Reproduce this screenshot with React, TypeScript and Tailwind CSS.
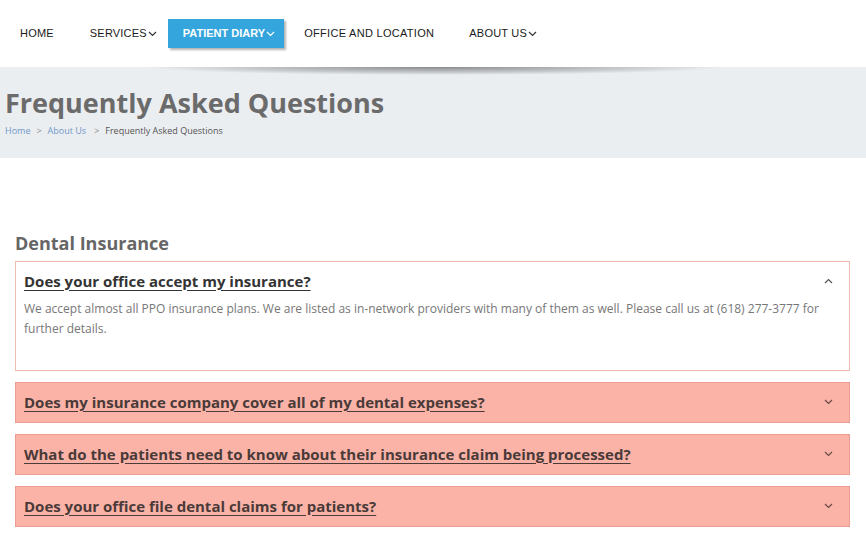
import React from "react";

const Chevron = ({ up = false, className = "" }: { up?: boolean; className?: string }) => (
  <svg width="9" height="6" viewBox="0 0 9 6" className={className}>
    <path
      d={up ? "M1 5 L4.5 1.5 L8 5" : "M1 1 L4.5 4.5 L8 1"}
      fill="none"
      stroke="currentColor"
      strokeWidth="1.2"
    />
  </svg>
);

const closed = [
  "Does my insurance company cover all of my dental expenses?",
  "What do the patients need to know about their insurance claim being processed?",
  "Does your office file dental claims for patients?",
];

export default function App() {
  return (
    <div className="w-[866px] h-[547px] bg-white overflow-hidden" style={{ fontFamily: '"Open Sans", sans-serif' }}>
      {/* Header nav */}
      <div className="h-[67px] flex items-center pl-[20px] text-[11px] tracking-[0.2px] text-[#1a1a1a]" style={{ fontFamily: '"Liberation Sans", Arial, sans-serif' }}>
        <span>HOME</span>
        <span className="ml-[36px] flex items-center gap-[1px]">
          SERVICES
          <Chevron className="text-[#333]" />
        </span>
        <span className="ml-[11px] h-[29px] pl-[15px] pr-[9px] flex items-center gap-[1px] bg-[#35a5dd] text-white font-bold tracking-normal shadow-[2px_2px_2px_rgba(0,0,0,0.3)]">
          PATIENT DIARY
          <Chevron className="text-white" />
        </span>
        <span className="ml-[20px] tracking-[0.3px]">OFFICE AND LOCATION</span>
        <span className="ml-[35px] flex items-center gap-[1px]">
          ABOUT US
          <Chevron className="text-[#333]" />
        </span>
      </div>

      {/* Title band */}
      <div className="relative h-[91px] bg-[#ebeef1] pl-[5px] pt-[19px]">
        <div
          className="absolute left-[90px] top-0 w-[690px] h-[10px]"
          style={{ background: "radial-gradient(ellipse 52% 100% at 50% 0%, rgba(0,0,0,0.42), rgba(0,0,0,0.15) 55%, rgba(0,0,0,0) 80%)" }}
        />
        <h1 className="text-[27px] leading-[34px] font-bold text-[#6b6b6b]">Frequently Asked Questions</h1>
        <div className="mt-[4px] text-[9px] leading-[14px] flex items-center gap-[6px] text-[#555]">
          <span className="text-[#6f98c8]">Home</span>
          <span className="text-[#888]">&gt;</span>
          <span className="text-[#6f98c8]">About Us</span>
          <span className="text-[#888] ml-[2px]">&gt;</span>
          <span>Frequently Asked Questions</span>
        </div>
      </div>

      {/* Content */}
      <div className="pl-[15px] pr-[16px] pt-[73px]">
        <h2 className="text-[18px] leading-[24px] font-bold text-[#666] mb-[6px]">Dental Insurance</h2>

        <div className="border border-[#efbdae] pl-[8px] pr-[16px] pt-[8px] pb-[31px]">
          <div className="flex items-center justify-between">
            <span className="text-[15px] leading-[22px] font-bold text-[#333] underline underline-offset-[3px]">
              Does your office accept my insurance?
            </span>
            <Chevron up className="text-[#555]" />
          </div>
          <p className="mt-[7px] text-[12px] leading-[20px] text-[#777]">
            We accept almost all PPO insurance plans. We are listed as in-network providers with many of them as well. Please call us at (618) 277-3777 for further details.
          </p>
        </div>

        {closed.map((q) => (
          <div
            key={q}
            className="mt-[11px] border border-[#ec9d93] bg-[#fbb3a8] pl-[8px] pr-[16px] pt-[8px] pb-[9px] flex items-center justify-between"
          >
            <span className="text-[15px] leading-[22px] font-bold text-[#4a3a38] underline underline-offset-[3px]">{q}</span>
            <Chevron className="text-[#6a4a45]" />
          </div>
        ))}
      </div>
    </div>
  );
}
